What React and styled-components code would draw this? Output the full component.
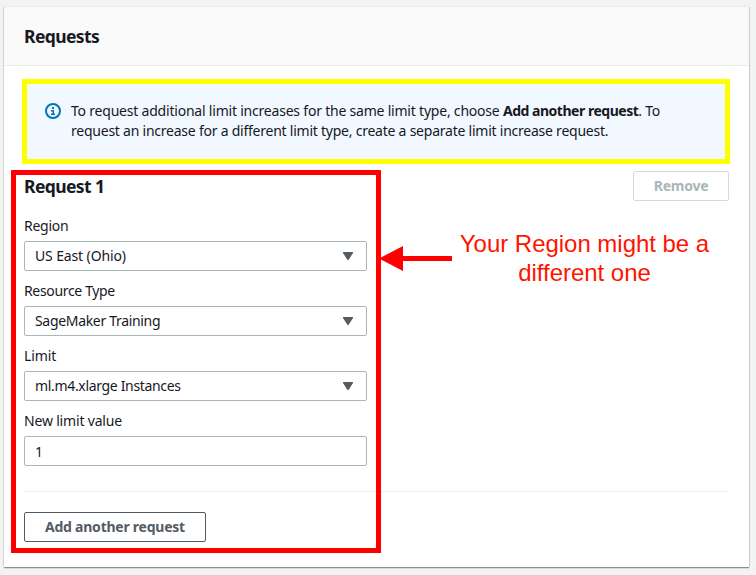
import React from "react";
import styled, { createGlobalStyle } from "styled-components";

const GlobalStyle = createGlobalStyle`
  *, *::before, *::after { box-sizing: border-box; }
  body {
    margin: 0;
    background: #f2f3f3;
    color: #16191f;
    font-family: "Noto Sans", "Open Sans", sans-serif;
    font-size: 14px;
    line-height: 20px;
  }
`;

const Page = styled.main`
  height: 575px;
  padding: 7px 7px 7px 4px;
  overflow: hidden;
`;

const Card = styled.section`
  position: relative;
  width: 745px;
  height: 560px;
  background: #fff;
  box-shadow: 0 1px 0 0 #879196, 0 2px 0 0 #d5dbdb, 1px 0 0 0 #c9cdce, -1px 0 0 0 #d0d4d5, 0 -1px 0 0 #e8eaea;
`;

const CardHeader = styled.header`
  height: 59px;
  padding: 18px 20px 0;
  background: #fafafa;
  border-bottom: 1px solid #eaeded;
`;

const Heading = styled.h2`
  margin: 0;
  font-size: 17.5px;
  line-height: 22px;
  font-weight: 700;
  white-space: nowrap;
  letter-spacing: -0.6px;
`;

const CardBody = styled.div`
  padding: 13px 20px 0;
`;

const Notice = styled.div`
  display: flex;
  gap: 10px;
  height: 85px;
  margin: 0 -1px 0 -2px;
  padding: 17px 20px 0 18px;
  background: #f1f8ff;
  border: 5px solid #ff0;
`;

const InfoIcon = styled.svg`
  flex: none;
  width: 16px;
  height: 16px;
  margin-top: 2px;
  fill: none;
  stroke: #0073bb;
`;

const NoticeText = styled.p`
  margin: 0;
  white-space: nowrap;
`;

const Line = styled.span`
  display: block;
  letter-spacing: ${(p) => p.$spacing};
`;

const Strong = styled.strong`
  font-weight: 700;
  letter-spacing: -0.48px;
`;

const RequestHeader = styled.div`
  display: flex;
  justify-content: space-between;
  align-items: flex-start;
  height: 45px;
  padding-top: 7px;
`;

const RequestTitle = styled(Heading)`
  padding-top: 4px;
`;

const Button = styled.button`
  width: ${(p) => p.$width};
  height: 30px;
  padding: 0;
  border: 1px solid #545b64;
  border-radius: 2px;
  background: #fff;
  color: #545b64;
  font: 700 14px/20px "Noto Sans", "Open Sans", sans-serif;
  letter-spacing: -0.24px;
  white-space: nowrap;

  &:disabled {
    border-color: #d5dbdb;
    color: #aab7b8;
  }
`;

const Form = styled.div`
  display: grid;
  gap: 10px;
  width: 343px;
  padding-top: 7px;
`;

const Field = styled.div`
  height: 55px;
`;

const Label = styled.label`
  display: block;
  height: 25px;
  white-space: nowrap;
  letter-spacing: ${(p) => p.$spacing};
`;

const Control = styled.div`
  display: flex;
  align-items: center;
  justify-content: space-between;
  height: 30px;
  padding: ${(p) => (p.$input ? "2px" : "0")} 13px 0 10px;
  border: 1px solid #aab7b8;
  border-radius: 2px;
  white-space: nowrap;
  letter-spacing: ${(p) => p.$spacing};
`;

const Caret = styled.svg`
  width: 10px;
  height: 8px;
  fill: #545b64;
`;

const Footer = styled.footer`
  margin-top: 25px;
  padding-top: 20px;
  border-top: 1px solid #eaeded;
`;

const Highlight = styled.div`
  position: absolute;
  left: 7px;
  top: 163px;
  width: 370px;
  height: 383px;
  border: 5px solid #f00;
  pointer-events: none;
`;

const Callout = styled.div`
  position: absolute;
  left: 375px;
  top: 222px;
  display: flex;
`;

const Arrow = styled.svg`
  width: 73px;
  height: 26px;
  margin-top: 16px;
  fill: #f00;
`;

const CalloutText = styled.p`
  width: 265px;
  margin: 0;
  color: #ff1400;
  font: 24px/29px "Liberation Sans", Arial, sans-serif;
  letter-spacing: -0.03px;
  text-align: center;
  white-space: nowrap;
`;

const CalloutLine = styled.span`
  display: block;
`;

const fields = [
  { label: "Region", value: "US East (Ohio)", select: true, ls: "-0.25px", vs: "-0.13px" },
  { label: "Resource Type", value: "SageMaker Training", select: true, ls: "-0.34px", vs: "-0.32px" },
  { label: "Limit", value: "ml.m4.xlarge Instances", select: true, ls: "-0.1px", vs: "-0.33px" },
  { label: "New limit value", value: "1", select: false, ls: "-0.18px", vs: "0" },
];

export default function App() {
  return (
    <>
      <GlobalStyle />
      <Page>
        <Card>
          <CardHeader>
            <Heading>Requests</Heading>
          </CardHeader>
          <CardBody>
            <Notice>
              <InfoIcon viewBox="0 0 16 16" aria-hidden="true">
                <circle cx="8" cy="8" r="7" strokeWidth="2" />
                <path d="M7 5h2" strokeWidth="2" />
                <path d="M6 7.75h2.25V11M6 11.25h4" strokeWidth="1.5" />
              </InfoIcon>
              <NoticeText>
                <Line $spacing="-0.21px">
                  To request additional limit increases for the same limit type, choose{" "}
                  <Strong>Add another request</Strong>. To
                </Line>
                <Line $spacing="-0.235px">
                  request an increase for a different limit type, create a separate limit increase request.
                </Line>
              </NoticeText>
            </Notice>
            <RequestHeader>
              <RequestTitle as="h3">Request 1</RequestTitle>
              <Button disabled $width="96px">Remove</Button>
            </RequestHeader>
            <Form>
              {fields.map((f) => (
                <Field key={f.label}>
                  <Label $spacing={f.ls}>{f.label}</Label>
                  <Control $spacing={f.vs} $input={!f.select}>
                    <span>{f.value}</span>
                    {f.select && (
                      <Caret viewBox="0 0 10 8" aria-hidden="true">
                        <path d="M0 0h10v1L5.5 8h-1L0 1z" />
                      </Caret>
                    )}
                  </Control>
                </Field>
              ))}
            </Form>
            <Footer>
              <Button $width="182px">Add another request</Button>
            </Footer>
          </CardBody>
          <Highlight />
          <Callout>
            <Arrow viewBox="0 0 73 26" aria-hidden="true">
              <path d="M0 13.5L24 1v10h49v5H24v10z" />
            </Arrow>
            <CalloutText>
              <CalloutLine>Your Region might be a</CalloutLine>
              <CalloutLine>different one</CalloutLine>
            </CalloutText>
          </Callout>
        </Card>
      </Page>
    </>
  );
}
